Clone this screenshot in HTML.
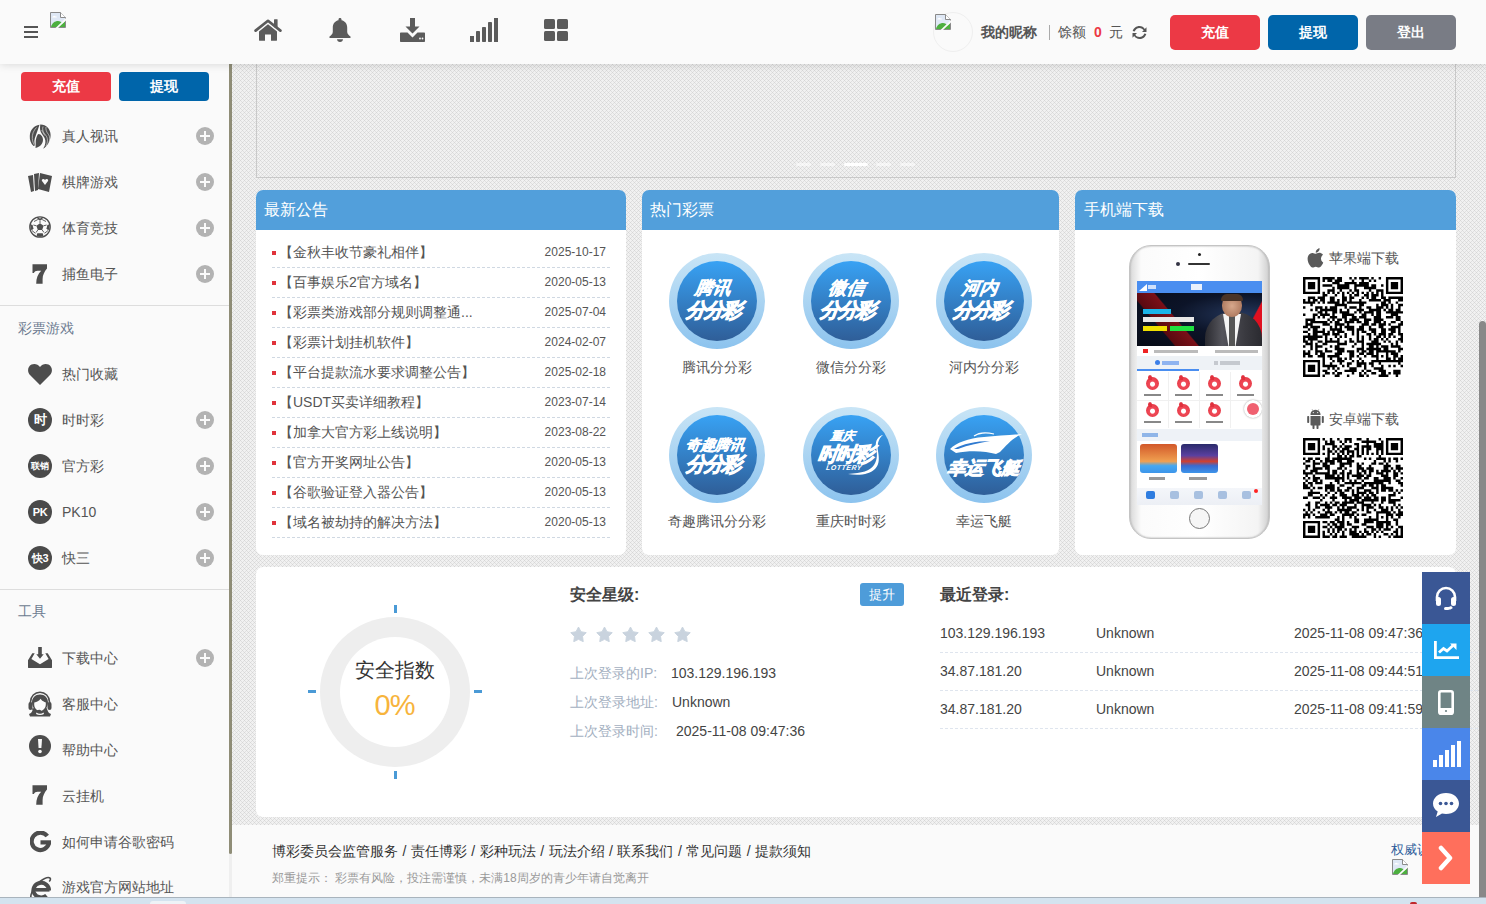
<!DOCTYPE html>
<html><head><meta charset="utf-8">
<style>
*{margin:0;padding:0;box-sizing:border-box}
html,body{width:1486px;height:904px;overflow:hidden}
body{font-family:"Liberation Sans",sans-serif;font-size:14px;color:#555;position:relative;background:#ebebeb}
.abs{position:absolute}
#bg{position:absolute;left:0;top:0}
#header{position:absolute;left:0;top:0;width:1486px;height:64px;background:#fafafa;box-shadow:0 1px 8px rgba(0,0,0,.13);z-index:10}
#sidebar{position:absolute;left:0;top:64px;width:229px;height:840px;background:#fafafa;overflow:hidden}
.sbtn{position:absolute;height:29px;width:90px;border-radius:4px;color:#fff;text-align:center;line-height:29px;font-size:14px;font-weight:bold}
.hbtn{position:absolute;top:15px;height:35px;width:90px;border-radius:5px;color:#fff;text-align:center;line-height:35px;font-size:14px;font-weight:bold}
.red{background:#ec3945}.blue{background:#0065aa}.gray{background:#797c85}
.mi{position:absolute;left:0;width:229px;height:46px}
.mi .ic{position:absolute;left:28px;top:11px;width:24px;height:24px}
.mi .tx{position:absolute;left:62px;top:0;line-height:46px;font-size:14px;color:#555;white-space:nowrap}
.mi .pl{position:absolute;left:196px;top:14px;width:18px;height:18px;border-radius:50%;background:#b3b3b3}
.mi .pl:before{content:"";position:absolute;left:4px;top:8px;width:10px;height:2px;background:#fafafa}
.mi .pl:after{content:"";position:absolute;left:8px;top:4px;width:2px;height:10px;background:#fafafa}
.sep{position:absolute;left:0;width:229px;height:1px;background:#ddd}
.grp{position:absolute;left:18px;font-size:14px;color:#6c7a90;line-height:16px}
.circ{position:absolute;left:28px;top:11px;width:24px;height:24px;border-radius:50%;background:#4a4a4a;color:#fff;font-size:13px;font-weight:bold;text-align:center;line-height:24px;white-space:nowrap;letter-spacing:-.3px}
.panel{position:absolute;top:190px;height:365px;background:#fff;border-radius:7px;overflow:hidden}
.ph{height:40px;background:#529fdb;color:#fff;font-size:16px;line-height:40px;padding-left:8px}
.nrow{position:absolute;left:16px;width:338px;height:30px;background:repeating-linear-gradient(90deg,#cfd8e2 0 3px,transparent 3px 5px) left bottom/100% 1px no-repeat}
.nrow .b{position:absolute;left:0;top:13px;width:4px;height:4px;background:#e0323a}
.nrow .t{position:absolute;left:7px;top:0;line-height:28px;font-size:14px;color:#555;white-space:nowrap}
.nrow .d{position:absolute;right:4px;top:0;line-height:28px;font-size:12px;color:#555}
.lot{position:absolute;width:96px;height:96px;border-radius:50%;background:linear-gradient(#c9e5f6,#8cc3ee)}
.lot .in{position:absolute;left:8px;top:8px;width:80px;height:80px;border-radius:50%;background:linear-gradient(#38a2f4,#2f5e98);color:#fff;text-align:center;font-weight:bold;font-style:italic}
.lname{position:absolute;width:140px;text-align:center;font-size:14px;color:#555;line-height:16px}
.lot .l1{position:absolute;left:-4px;width:80px;top:16px;font-size:18px;line-height:22px;text-align:center;transform:skewX(-8deg);-webkit-text-stroke:.2px #fff}
.lot .l2{position:absolute;left:-4px;width:80px;top:37px;font-size:20px;line-height:24px;text-align:center;transform:skewX(-8deg);letter-spacing:-2px;-webkit-text-stroke:.9px #fff}
.fb{position:absolute;left:1422px;width:48px;height:52px}
.lbl{position:absolute;left:570px;font-size:14px;color:#a3afbf;line-height:16px;white-space:nowrap}
.val{position:absolute;font-size:14px;color:#444;line-height:16px;white-space:nowrap}
.lr{position:absolute;left:940px;width:540px;height:38px;background:repeating-linear-gradient(90deg,#dfe5ee 0 3px,transparent 3px 5px) left bottom/100% 1px no-repeat}
.lr span{position:absolute;top:4px;line-height:28px;font-size:14px;color:#444;white-space:nowrap}
</style></head><body>

<svg id="bg" width="1486" height="904"><defs>
<pattern id="chk" width="4" height="4" patternUnits="userSpaceOnUse"><rect width="4" height="4" fill="#f1f1f1"/><rect x="0" y="0" width="1" height="1" fill="#d6d6d6"/><rect x="2" y="2" width="1" height="1" fill="#d6d6d6"/><rect x="1" y="1" width="1" height="1" fill="#e0e0e0"/><rect x="3" y="3" width="1" height="1" fill="#e0e0e0"/><rect x="3" y="1" width="1" height="1" fill="#e0e0e0"/><rect x="1" y="3" width="1" height="1" fill="#e0e0e0"/></pattern>
</defs><rect width="1486" height="904" fill="url(#chk)"/></svg>

<!-- HEADER -->
<div id="header">
  <div class="abs" style="left:24px;top:26px;width:14px;height:2px;background:#555"></div>
  <div class="abs" style="left:24px;top:31px;width:14px;height:2px;background:#555"></div>
  <div class="abs" style="left:24px;top:36px;width:14px;height:2px;background:#555"></div>
<svg class="abs" style="left:254px;top:19px" width="28" height="22" viewBox="0 0 28 22"><g fill="#5b5b5b"><rect x="20" y="0.300" width="3.600" height="8" rx=".5"/><path d="M5 12.500L14 5.300 23 12.500v8.700c0 .3-.2.5-.5.5H17v-6.300h-6v6.300H5.500c-.3 0-.5-.2-.5-.5z"/></g><path d="M1.600 11.600L14 1.800 26.400 11.600" fill="none" stroke="#5b5b5b" stroke-width="2.700" stroke-linecap="round" stroke-linejoin="round"/></svg>
<svg class="abs" style="left:329px;top:18px" width="22" height="24" viewBox="0 0 22 24"><g fill="#5b5b5b"><path d="M11 0c.9 0 1.500.6 1.500 1.400v.8c3.600.7 5.700 3.600 5.700 7.300v4.300c0 2 1.300 3.400 3.300 4.700v1.600H.5v-1.600c2-1.300 3.300-2.700 3.300-4.700V9.500c0-3.700 2.100-6.600 5.700-7.300v-.8C9.500.6 10.100 0 11 0z"/><path d="M8 21.200h6c0 1.600-1.300 2.800-3 2.800s-3-1.200-3-2.800z"/></g></svg>
<svg class="abs" style="left:400px;top:18px" width="25" height="24" viewBox="0 0 25 24"><g fill="#5b5b5b"><path d="M10 0h5v8.500h4.500L12.500 15.500 5.500 8.500H10z"/><path d="M0 15.500c0-.6.400-1 1-1h6.500l5 5 5-5H24c.6 0 1 .4 1 1V23c0 .6-.4 1-1 1H1c-.6 0-1-.4-1-1z"/></g><g fill="#fafafa"><circle cx="20" cy="20.500" r=".9"/><circle cx="22.500" cy="20.500" r=".9"/></g></svg>
<svg class="abs" style="left:470px;top:18px" width="28" height="24" viewBox="0 0 28 24"><g fill="#5b5b5b"><rect x="0" y="18" width="4" height="6"/><rect x="6" y="13" width="4" height="11" rx=".8"/><rect x="12" y="9" width="4" height="15" rx=".8"/><rect x="18" y="4" width="4" height="20" rx=".8"/><rect x="24" y="0" width="4" height="24"/></g></svg>
<svg class="abs" style="left:544px;top:19px" width="24" height="22" viewBox="0 0 24 22"><g fill="#5b5b5b"><rect x="0" y="0" width="11" height="10" rx="1.500"/><rect x="13" y="0" width="11" height="10" rx="1.500"/><rect x="0" y="12" width="11" height="10" rx="1.500"/><rect x="13" y="12" width="11" height="10" rx="1.500"/></g></svg>
<svg class="abs" style="left:1132px;top:26px" width="15" height="13" viewBox="0 0 15 13"><g fill="#555"><path d="M7.500 0c2.300 0 4.200 1.200 5.300 2.900L14.500 1.300V6H10l1.700-1.700C10.900 3 9.300 2 7.500 2 5.200 2 3.300 3.600 2.700 5.600L.7 5.100C1.500 2.200 4.200 0 7.500 0z"/><path d="M7.500 13c-2.300 0-4.200-1.200-5.300-2.900L.5 11.700V7H5L3.300 8.700C4.100 10 5.700 11 7.500 11c2.300 0 4.200-1.600 4.800-3.600l2 .5C13.500 10.800 10.800 13 7.500 13z"/></g></svg>
<svg class="abs" style="left:50px;top:12px" width="16" height="16" viewBox="0 0 16 16"><path d="M.5.5h10l5 5v10H.5z" fill="#dfe8f5" stroke="#8a8a8a" stroke-width="1"/><path d="M10.500.5v5h5" fill="#fff" stroke="#8a8a8a" stroke-width="1"/><path d="M3 4.500c.5-1 2-1 2.500 0h1c.5 0 .5 1 0 1H2.500c-.5 0-.5-1 .5-1z" fill="#fff"/><path d="M1 15c1-4 4-6 7-6 2 0 3.500 1 4.500 2.500L15 9v6z" fill="#4caf3f"/><path d="M8 16L16 8.500V6L5.500 16z" fill="#fafafa"/></svg>
<div class="abs" style="left:933px;top:12px;width:40px;height:40px;border-radius:50%;border:1px solid #efefef;overflow:hidden"></div>
<svg class="abs" style="left:935px;top:14px" width="16" height="16" viewBox="0 0 16 16"><path d="M.5.5h10l5 5v10H.5z" fill="#dfe8f5" stroke="#8a8a8a" stroke-width="1"/><path d="M10.500.5v5h5" fill="#fff" stroke="#8a8a8a" stroke-width="1"/><path d="M3 4.500c.5-1 2-1 2.500 0h1c.5 0 .5 1 0 1H2.500c-.5 0-.5-1 .5-1z" fill="#fff"/><path d="M1 15c1-4 4-6 7-6 2 0 3.500 1 4.500 2.500L15 9v6z" fill="#4caf3f"/><path d="M8 16L16 8.500V6L5.500 16z" fill="#fafafa"/></svg>
  <div class="abs" style="left:981px;top:24px;line-height:16px;font-size:14px;font-weight:bold;color:#555">我的昵称</div>
  <div class="abs" style="left:1049px;top:25px;width:1px;height:15px;background:#aaa"></div>
  <div class="abs" style="left:1058px;top:24px;line-height:16px;font-size:14px;color:#555">馀额</div>
  <div class="abs" style="left:1094px;top:24px;line-height:16px;font-size:14px;font-weight:bold;color:#ec3945">0</div>
  <div class="abs" style="left:1109px;top:24px;line-height:16px;font-size:14px;color:#555">元</div>
  <div class="hbtn red" style="left:1170px">充值</div>
  <div class="hbtn blue" style="left:1268px">提现</div>
  <div class="hbtn gray" style="left:1366px">登出</div>
</div>

<!-- SIDEBAR -->
<div id="sidebar">
<svg class="abs" style="left:29px;top:60px" width="22" height="25" viewBox="0 0 22 25"><g fill="#4d4d4d"><path d="M10.500 .7C5 1.500 1 6 .8 12c-.2 4 1 7.500 3.700 10l1.800-.8C4.800 19 5.200 15 6.800 11.500 8.200 7.800 9.200 4.500 10.500.7z"/><path d="M9.600 10c2.600.3 4.400 2.800 4.400 5.800 0 4-2.800 7-7.500 8.200.2-1.800.2-3.800.2-6 0-2.500.6-4.500 1.300-6 .5-1.200 1-1.800 1.600-2z"/><path d="M11.200.5C17 .3 21.600 5 21.600 11c0 6-3 11-7.500 13.800 2.500-3.800 3-7.800 1.500-10.800-1.500-3-4-5-4.500-8.500-.2-2 .1-3.500.1-5z"/></g><g fill="none" stroke="#fafafa" stroke-width=".55"><path d="M14 2.500c-1 3 0 6 2.500 8.500 2.500 3 2.500 7 .5 11"/><path d="M17 3c-.5 2.500.5 5 2.500 7.500 1.500 2 1.500 5 .5 8"/><path d="M12.800 6c.5 2 2 3.500 3 5.500"/><path d="M7.500 3.500C4.500 6.500 3 10.500 3.300 14.500c.2 2.800 1 5 2.300 6.800"/></g></svg>
<svg class="abs" style="left:27px;top:108px" width="26" height="20" viewBox="0 0 26 20"><g fill="#4d4d4d"><path d="M1 4l5-1 1 16-3 1z"/><path d="M7 2l5-1-1 17-3 1z"/><path d="M13 1l12 3-3 16-11-3z"/></g><path fill="#fafafa" d="M18 8c1-2 4-1 3 1l-3 4-3-4c-1-2 2-3 3-1z"/></svg>
<svg class="abs" style="left:29px;top:152px" width="22" height="22" viewBox="0 0 22 22"><circle cx="11" cy="11" r="10.200" fill="#fafafa" stroke="#4d4d4d" stroke-width="1.300"/><g fill="#4d4d4d"><path d="M11 7.200l3.600 2.600-1.400 4.200H8.800L7.400 9.800z"/><path d="M8 1.300l3 1.200 3-1.200-.8 2.300L11 4.300 8.800 3.600z"/><path d="M1.300 8.300l2.300.6.8 3.300-1.500 2.300-1.400-1.700z"/><path d="M20.700 8.300l-2.300.6-.8 3.300 1.500 2.300 1.400-1.700z"/><path d="M7.500 19.800l.8-2.500h5.400l.8 2.500-3.500 1.300z"/></g><g fill="none" stroke="#4d4d4d" stroke-width=".9"><path d="M11 4.300v2.900M7.400 9.800L4.400 9M14.600 9.800l3-.8M8.800 14l-1.800 2.500M13.200 14l1.800 2.500M8.800 3.600L5 5.500M13.200 3.600L17 5.500M2.900 14.500l3.500 2.800M19.100 14.500l-3.500 2.800"/></g></svg>
<svg class="abs" style="left:32px;top:200px" width="15" height="20" viewBox="0 0 15 20"><path fill="#4d4d4d" d="M.5 .3H15v4.200C12.500 7.500 10.600 11 10.600 15v4.700H4.200C4.200 14 6 10 9.200 6.800H5.500C3.800 6.800 2.600 7.500 1.900 9H.5z"/></svg>
<svg class="abs" style="left:28px;top:299px" width="24" height="22" viewBox="0 0 24 22"><path fill="#4d4d4d" d="M12 22L2 12C-1 9-.5 3.500 3.500 1.500 7 0 10 1.500 12 4c2-2.500 5-4 8.500-2.500 4 2 4.500 7.500 1.500 10.500z"/></svg>
<svg class="abs" style="left:28px;top:582px" width="24" height="23" viewBox="0 0 24 23"><g fill="#4d4d4d"><rect x="10.200" y="1" width="3.600" height="8"/><path d="M8.300 8.300h7.400L12 12.800z"/><path d="M0 14.200L4.300 7.200h2.400L3.400 13 12 18.300 20.600 13 17.300 7.200h2.400L24 14.200v7.300c0 .3-.2.5-.5.5H.5c-.3 0-.5-.2-.5-.5z"/></g></svg>
<svg class="abs" style="left:27px;top:626px" width="26" height="27" viewBox="0 0 26 27"><path d="M3.500 15V12C3.500 6.500 7.800 2.200 13 2.200S22.500 6.500 22.500 12v3" fill="none" stroke="#4d4d4d" stroke-width="1.600"/><g fill="#4d4d4d"><path d="M13 4.500c-4.800 0-8 3.300-8 8 0 2 .6 3.800 1.500 5.200L5 21.500c-.5 1.200-1.500 2-3 2.500L3 26.500h20l1-2.500c-1.500-.5-2.500-1.300-3-2.500l-1.500-3.800c.9-1.400 1.500-3.200 1.500-5.200 0-4.700-3.200-8-8-8z"/><rect x="1.500" y="12" width="4" height="8" rx="2"/><rect x="20.500" y="12" width="4" height="8" rx="2"/></g><path fill="#fafafa" d="M7.300 12.500c2.500-.3 4.800-1.500 6.300-3.700.8 1.500 2.300 2.600 3.900 3.100.6 0 1.100.2 1.300.6v2c0 3.500-2.600 6.500-5.800 6.500s-5.800-3-5.800-6.500z"/><path d="M5.200 18.500c1 1.700 3 2.300 6 2.300" fill="none" stroke="#4d4d4d" stroke-width="1.200"/><ellipse cx="12.300" cy="20.800" rx="1.700" ry="1.100" fill="#4d4d4d"/><path fill="#fafafa" d="M9.500 22.500c1 .8 2.200 1.200 3.500 1.200s2.500-.4 3.500-1.200l.5 1.500c-1.200.7-2.500 1-4 1s-2.800-.3-4-1z"/></svg>
<svg class="abs" style="left:29px;top:671px" width="22" height="22" viewBox="0 0 22 22"><circle cx="11" cy="11" r="11" fill="#4d4d4d"/><path fill="#fafafa" d="M9 4h4l-.6 9H9.600z"/><circle cx="11" cy="16.500" r="1.800" fill="#fafafa"/></svg>
<svg class="abs" style="left:32px;top:721px" width="15" height="20" viewBox="0 0 15 20"><path fill="#4d4d4d" d="M.5 .3H15v4.200C12.500 7.500 10.600 11 10.600 15v4.700H4.200C4.200 14 6 10 9.200 6.800H5.500C3.800 6.800 2.600 7.500 1.900 9H.5z"/></svg>
<svg class="abs" style="left:30px;top:767px" width="21" height="22" viewBox="0 0 21 22"><path d="M17.300 5A8.700 8.700 0 1 0 19 11.500" fill="none" stroke="#4d4d4d" stroke-width="4.200"/><rect x="10.500" y="9.300" width="10.500" height="4.200" fill="#4d4d4d"/></svg>
<svg class="abs" style="left:28px;top:811px" width="24" height="24" viewBox="0 0 24 24"><path d="M21 15.500A7.800 7.300 0 1 0 18.500 20.500" fill="none" stroke="#4d4d4d" stroke-width="4"/><rect x="6" y="13" width="15.500" height="3.600" fill="#4d4d4d"/><path fill="none" stroke="#4d4d4d" stroke-width="1.600" d="M3 23.500C2 19 6 11 12 6.500c4-3 8-5 10-3.500 1 .8.200 2.500-.8 3.500"/></svg>
  <div class="sbtn red" style="left:21px;top:8px">充值</div>
  <div class="sbtn blue" style="left:119px;top:8px">提现</div>
  <div class="mi" style="top:49px"><div class="ic"></div><div class="tx">真人视讯</div><div class="pl"></div></div>
  <div class="mi" style="top:95px"><div class="ic"></div><div class="tx">棋牌游戏</div><div class="pl"></div></div>
  <div class="mi" style="top:141px"><div class="ic"></div><div class="tx">体育竞技</div><div class="pl"></div></div>
  <div class="mi" style="top:187px"><div class="ic"></div><div class="tx">捕鱼电子</div><div class="pl"></div></div>
  <div class="sep" style="top:241px"></div>
  <div class="grp" style="top:256px">彩票游戏</div>
  <div class="mi" style="top:287px"><div class="ic"></div><div class="tx">热门收藏</div></div>
  <div class="mi" style="top:333px"><div class="circ">时</div><div class="tx">时时彩</div><div class="pl"></div></div>
  <div class="mi" style="top:379px"><div class="circ" style="font-size:9px">联销</div><div class="tx">官方彩</div><div class="pl"></div></div>
  <div class="mi" style="top:425px"><div class="circ" style="font-size:11px">PK</div><div class="tx">PK10</div><div class="pl"></div></div>
  <div class="mi" style="top:471px"><div class="circ" style="font-size:11px">快3</div><div class="tx">快三</div><div class="pl"></div></div>
  <div class="sep" style="top:525px"></div>
  <div class="grp" style="top:539px">工具</div>
  <div class="mi" style="top:571px"><div class="ic"></div><div class="tx">下载中心</div><div class="pl"></div></div>
  <div class="mi" style="top:617px"><div class="ic"></div><div class="tx">客服中心</div></div>
  <div class="mi" style="top:663px"><div class="ic"></div><div class="tx">帮助中心</div></div>
  <div class="mi" style="top:709px"><div class="ic"></div><div class="tx">云挂机</div></div>
  <div class="mi" style="top:755px"><div class="ic"></div><div class="tx">如何申请谷歌密码</div></div>
  <div class="mi" style="top:800px"><div class="ic"></div><div class="tx">游戏官方网站地址</div></div>
</div>
<div class="abs" style="left:229px;top:64px;width:3px;height:840px;background:#efefef"></div>
<div class="abs" style="left:229px;top:64px;width:3px;height:790px;background:#8f8d77;border-radius:0 0 2px 2px"></div>

<!-- BANNER -->
<div class="abs" style="left:256px;top:40px;width:1200px;height:138px;border:1px solid #c9c9c9;border-top:none"></div>
<div class="abs" style="left:796px;top:163px;width:15px;height:3px;border-radius:2px;background:rgba(255,255,255,.55)"></div>
<div class="abs" style="left:820px;top:163px;width:15px;height:3px;border-radius:2px;background:rgba(255,255,255,.55)"></div>
<div class="abs" style="left:844px;top:163px;width:24px;height:3px;border-radius:2px;background:#fff"></div>
<div class="abs" style="left:876px;top:163px;width:15px;height:3px;border-radius:2px;background:rgba(255,255,255,.55)"></div>
<div class="abs" style="left:900px;top:163px;width:15px;height:3px;border-radius:2px;background:rgba(255,255,255,.55)"></div>

<!-- PANEL 1 -->
<div class="panel" style="left:256px;width:370px">
  <div class="ph">最新公告</div>
  <div class="nrow" style="top:48px"><div class="b"></div><div class="t">【金秋丰收节豪礼相伴】</div><div class="d">2025-10-17</div></div>
  <div class="nrow" style="top:78px"><div class="b"></div><div class="t">【百事娱乐2官方域名】</div><div class="d">2020-05-13</div></div>
  <div class="nrow" style="top:108px"><div class="b"></div><div class="t">【彩票类游戏部分规则调整通...</div><div class="d">2025-07-04</div></div>
  <div class="nrow" style="top:138px"><div class="b"></div><div class="t">【彩票计划挂机软件】</div><div class="d">2024-02-07</div></div>
  <div class="nrow" style="top:168px"><div class="b"></div><div class="t">【平台提款流水要求调整公告】</div><div class="d">2025-02-18</div></div>
  <div class="nrow" style="top:198px"><div class="b"></div><div class="t">【USDT买卖详细教程】</div><div class="d">2023-07-14</div></div>
  <div class="nrow" style="top:228px"><div class="b"></div><div class="t">【加拿大官方彩上线说明】</div><div class="d">2023-08-22</div></div>
  <div class="nrow" style="top:258px"><div class="b"></div><div class="t">【官方开奖网址公告】</div><div class="d">2020-05-13</div></div>
  <div class="nrow" style="top:288px"><div class="b"></div><div class="t">【谷歌验证登入器公告】</div><div class="d">2020-05-13</div></div>
  <div class="nrow" style="top:318px"><div class="b"></div><div class="t">【域名被劫持的解决方法】</div><div class="d">2020-05-13</div></div>
</div>

<!-- PANEL 2 -->
<div class="panel" style="left:642px;width:417px">
  <div class="ph">热门彩票</div>
  <div class="lot" style="left:27px;top:63px"><div class="in"><div class="l1">腾讯</div><div class="l2">分分彩</div></div></div>
  <div class="lname" style="left:5px;top:169px">腾讯分分彩</div>
  <div class="lot" style="left:161px;top:63px"><div class="in"><div class="l1">微信</div><div class="l2">分分彩</div></div></div>
  <div class="lname" style="left:139px;top:169px">微信分分彩</div>
  <div class="lot" style="left:294px;top:63px"><div class="in"><div class="l1">河内</div><div class="l2">分分彩</div></div></div>
  <div class="lname" style="left:272px;top:169px">河内分分彩</div>
  <div class="lot" style="left:27px;top:217px"><div class="in"><div class="l1" style="font-size:15px;top:19px;left:-2px;letter-spacing:-.5px">奇趣腾讯</div><div class="l2" style="top:37px">分分彩</div></div></div>
  <div class="lname" style="left:5px;top:323px">奇趣腾讯分分彩</div>
  <div class="lot" style="left:161px;top:217px"><div class="in"><div class="l1" style="font-size:12px;line-height:14px;top:14px;left:-8px">重庆</div><div class="l2" style="top:27px;font-size:20px;left:-6px">时时彩</div><div class="l1" style="font-size:7px;line-height:8px;top:49px;left:-7px;letter-spacing:.5px;font-family:'Liberation Sans';-webkit-text-stroke:0">LOTTERY</div><svg class="abs" style="left:0;top:0" width="80" height="80" viewBox="0 0 80 80"><path fill="#fff" d="M72 20c-5 1-8 6-7 12 1 6 2 12-2 18-4 6-12 8-26 9 12 2 22 0 27-5 5-5 4-12 3-18-1-6 0-12 5-16z"/></svg></div></div>
  <div class="lname" style="left:139px;top:323px">重庆时时彩</div>
  <div class="lot" style="left:294px;top:217px"><div class="in"><svg class="abs" style="left:0;top:0" width="80" height="80" viewBox="0 0 80 80"><path fill="#fff" d="M6 34c6-6 18-11 34-12 12-1 26-2 38-3-10 4-16 12-22 18l-4 2c-10-3-26-4-40-1z"/><path fill="#2f7ad0" d="M10 34c8-5 22-8 36-8-10 2-22 4-32 8z"/><path fill="none" stroke="#fff" stroke-width="1.2" d="M30 21c4-3 12-4 20-2"/></svg><div class="l2" style="top:41px;font-size:18px;left:-8px;width:96px;letter-spacing:0">幸运飞艇</div></div></div>
  <div class="lname" style="left:272px;top:323px">幸运飞艇</div>
</div>

<!-- PANEL 3 -->
<div class="panel" style="left:1075px;width:381px">
  <div class="ph" style="padding-left:9px">手机端下载</div>

  <div class="abs" style="left:54px;top:55px;width:141px;height:294px;border-radius:22px;background:linear-gradient(90deg,#d9d9d9,#fbfbfb 8%,#fff 50%,#f4f4f4 92%,#cfcfcf);border:1px solid #c4c4c4;box-shadow:inset 0 0 2px #999"></div>
  <div class="abs" style="left:123px;top:63px;width:3px;height:3px;border-radius:50%;background:#222"></div>
  <div class="abs" style="left:101px;top:72px;width:4px;height:4px;border-radius:50%;background:#334"></div>
  <div class="abs" style="left:113px;top:73px;width:22px;height:2px;border-radius:1px;background:#333"></div>
  <div class="abs" style="left:114px;top:318px;width:21px;height:21px;border-radius:50%;border:1px solid #777;background:#f6f6f6"></div>
  <div class="abs" style="left:62px;top:91px;width:125px;height:224px;background:#fff;overflow:hidden">
    <div class="abs" style="left:0;top:0;width:125px;height:12px;background:#4a8ef0"></div>
    <div class="abs" style="left:2px;top:3px;width:8px;height:7px;background:#fff;clip-path:polygon(0 100%,100% 0,100% 100%)"></div>
    <div class="abs" style="left:11px;top:4px;width:8px;height:4px;background:#cfe0fb"></div>
    <div class="abs" style="left:54px;top:3px;width:11px;height:6px;background:#e8f0fc"></div>
    <div class="abs" style="left:0;top:12px;width:125px;height:53px;background:radial-gradient(ellipse at 85% 40%,#24365a 0,#0c1428 45%,#070b16 100%)"></div>
    <div class="abs" style="left:0;top:12px;width:125px;height:53px;background:linear-gradient(50deg,transparent 22%,#5a0a10 23%,#7a1018 36%,transparent 37%)"></div>
    <div class="abs" style="left:0;top:12px;width:125px;height:53px;background:linear-gradient(118deg,transparent 84%,#e01020 85%)"></div>
    <div class="abs" style="left:68px;top:31px;width:57px;height:34px;border-radius:26px 26px 0 0;background:linear-gradient(90deg,#2a2a30,#55555c 30%,#3a3a40 70%,#2a2a30)"></div>
    <div class="abs" style="left:86px;top:33px;width:18px;height:32px;background:#f4f4f4;clip-path:polygon(0 0,100% 0,70% 100%,30% 100%)"></div>
    <div class="abs" style="left:92px;top:35px;width:6px;height:30px;background:#555"></div>
    <div class="abs" style="left:85px;top:14px;width:20px;height:22px;border-radius:45% 45% 50% 50%;background:radial-gradient(#d7a88c,#a06a50)"></div>
    <div class="abs" style="left:84px;top:13px;width:22px;height:7px;border-radius:10px 10px 2px 2px;background:#4a3428"></div>
    <div class="abs" style="left:6px;top:28px;width:28px;height:5px;background:#19b4e8"></div>
    <div class="abs" style="left:6px;top:36px;width:51px;height:5px;background:#e8e8e8"></div>
    <div class="abs" style="left:6px;top:45px;width:24px;height:5px;background:#f0e000"></div>
    <div class="abs" style="left:33px;top:45px;width:24px;height:5px;background:#20e040"></div>
    <div class="abs" style="left:0;top:65px;width:125px;height:10px;background:#fff"></div>
    <div class="abs" style="left:6px;top:68px;width:5px;height:4px;background:#e22"></div>
    <div class="abs" style="left:17px;top:69px;width:44px;height:3px;background:#bbb"></div>
    <div class="abs" style="left:78px;top:69px;width:43px;height:3px;background:#bbb"></div>
    <div class="abs" style="left:0;top:75px;width:125px;height:14px;background:#eef2f6"></div>
    <div class="abs" style="left:0;top:88px;width:62px;height:2px;background:#4a8ef0"></div>
    <div class="abs" style="left:18px;top:79px;width:5px;height:5px;border-radius:50%;background:#3b7fe8"></div>
    <div class="abs" style="left:25px;top:80px;width:17px;height:4px;background:#8fb4f0"></div>
    <div class="abs" style="left:77px;top:80px;width:4px;height:4px;background:#c5c9cf"></div>
    <div class="abs" style="left:83px;top:80px;width:20px;height:4px;background:#c5c9cf"></div>
    <div class="abs" style="left:31px;top:91px;width:1px;height:56px;background:#f0f0f0"></div>
    <div class="abs" style="left:62px;top:91px;width:1px;height:56px;background:#f0f0f0"></div>
    <div class="abs" style="left:93px;top:91px;width:1px;height:56px;background:#f0f0f0"></div>
    <div class="abs" style="left:0;top:119px;width:125px;height:1px;background:#f0f0f0"></div>
<div class="abs" style="left:9px;top:96px;width:13px;height:13px;border-radius:50%;background:radial-gradient(circle at 50% 55%,#fff 0 2px,#f04a58 3px,#e0303c)"></div><div class="abs" style="left:11px;top:94px;width:4px;height:5px;border-radius:50% 50% 0 50%;background:#e0303c"></div><div class="abs" style="left:7px;top:113px;width:17px;height:2px;background:#888"></div><div class="abs" style="left:40px;top:96px;width:13px;height:13px;border-radius:50%;background:radial-gradient(circle at 50% 55%,#fff 0 2px,#f04a58 3px,#e0303c)"></div><div class="abs" style="left:42px;top:94px;width:4px;height:5px;border-radius:50% 50% 0 50%;background:#e0303c"></div><div class="abs" style="left:38px;top:113px;width:17px;height:2px;background:#888"></div><div class="abs" style="left:71px;top:96px;width:13px;height:13px;border-radius:50%;background:radial-gradient(circle at 50% 55%,#fff 0 2px,#f04a58 3px,#e0303c)"></div><div class="abs" style="left:73px;top:94px;width:4px;height:5px;border-radius:50% 50% 0 50%;background:#e0303c"></div><div class="abs" style="left:69px;top:113px;width:17px;height:2px;background:#888"></div><div class="abs" style="left:102px;top:96px;width:13px;height:13px;border-radius:50%;background:radial-gradient(circle at 50% 55%,#fff 0 2px,#f04a58 3px,#e0303c)"></div><div class="abs" style="left:104px;top:94px;width:4px;height:5px;border-radius:50% 50% 0 50%;background:#e0303c"></div><div class="abs" style="left:100px;top:113px;width:17px;height:2px;background:#888"></div><div class="abs" style="left:9px;top:123px;width:13px;height:13px;border-radius:50%;background:radial-gradient(circle at 50% 55%,#fff 0 2px,#f04a58 3px,#e0303c)"></div><div class="abs" style="left:11px;top:121px;width:4px;height:5px;border-radius:50% 50% 0 50%;background:#e0303c"></div><div class="abs" style="left:7px;top:140px;width:17px;height:2px;background:#888"></div><div class="abs" style="left:40px;top:123px;width:13px;height:13px;border-radius:50%;background:radial-gradient(circle at 50% 55%,#fff 0 2px,#f04a58 3px,#e0303c)"></div><div class="abs" style="left:42px;top:121px;width:4px;height:5px;border-radius:50% 50% 0 50%;background:#e0303c"></div><div class="abs" style="left:38px;top:140px;width:17px;height:2px;background:#888"></div><div class="abs" style="left:71px;top:123px;width:13px;height:13px;border-radius:50%;background:radial-gradient(circle at 50% 55%,#fff 0 2px,#f04a58 3px,#e0303c)"></div><div class="abs" style="left:73px;top:121px;width:4px;height:5px;border-radius:50% 50% 0 50%;background:#e0303c"></div><div class="abs" style="left:69px;top:140px;width:17px;height:2px;background:#888"></div><div class="abs" style="left:107px;top:119px;width:18px;height:18px;border-radius:50%;background:#fff;box-shadow:0 0 2px #999"></div><div class="abs" style="left:110px;top:122px;width:12px;height:12px;border-radius:50%;background:#f06070"></div>
    <div class="abs" style="left:0;top:148px;width:125px;height:12px;background:#eef2f7"></div>
    <div class="abs" style="left:5px;top:152px;width:16px;height:4px;background:#8fb5e8"></div>
    <div class="abs" style="left:3px;top:163px;width:37px;height:29px;border-radius:3px;background:linear-gradient(#d2582a,#f0a050 60%,#45a8f0 75%,#3d95ea)"></div>
    <div class="abs" style="left:44px;top:163px;width:37px;height:29px;border-radius:3px;background:linear-gradient(#2a2a6a,#5a40a0 40%,#d04030 60%,#3a6ad0 75%,#3d95ea)"></div>
    <div class="abs" style="left:12px;top:196px;width:16px;height:3px;background:#999"></div>
    <div class="abs" style="left:52px;top:196px;width:18px;height:3px;background:#999"></div>
    <div class="abs" style="left:0;top:207px;width:125px;height:17px;background:linear-gradient(#f4f6fa,#eceff5)"></div>
    <div class="abs" style="left:9px;top:210px;width:9px;height:8px;border-radius:2px;background:#2f7de0"></div><div class="abs" style="left:33px;top:210px;width:9px;height:8px;border-radius:2px;background:#a8c0e0"></div><div class="abs" style="left:57px;top:210px;width:9px;height:8px;border-radius:2px;background:#a8c0e0"></div><div class="abs" style="left:81px;top:210px;width:9px;height:8px;border-radius:2px;background:#a8c0e0"></div><div class="abs" style="left:105px;top:210px;width:9px;height:8px;border-radius:2px;background:#a8c0e0"></div><div class="abs" style="left:117px;top:208px;width:4px;height:4px;border-radius:50%;background:#f22"></div>
  </div>
  <div class="abs" style="left:190px;top:346px;width:3px;height:3px;background:#fff"></div>
<svg class="abs" style="left:232px;top:58px" width="17" height="20" viewBox="0 0 17 20"><path fill="#5a5a5a" d="M14 10.6c0-2.5 2-3.7 2.1-3.8-1.2-1.7-3-1.9-3.6-2-1.5-.2-3 .9-3.8.9-.8 0-2-.9-3.3-.8C3.700 5 2.200 5.900 1.400 7.400c-1.700 3-.4 7.300 1.200 9.700.8 1.200 1.800 2.500 3 2.400 1.200 0 1.700-.8 3.100-.8 1.500 0 1.900.8 3.200.8 1.300 0 2.200-1.200 3-2.400.9-1.300 1.300-2.600 1.300-2.700 0 0-2.300-.9-2.200-3.800zM11.600 3.300c.7-.8 1.100-1.900 1-3-1 0-2.100.7-2.800 1.500-.6.700-1.200 1.800-1 2.900 1.100.1 2.100-.6 2.800-1.400z"/></svg>
  <div class="abs" style="left:254px;top:60px;font-size:14px;line-height:16px;color:#555">苹果端下载</div>
  <svg class="abs" style="left:228px;top:87px" width="100" height="100" viewBox="0 0 41 41"><rect width="41" height="41" fill="#fff"/><path fill="#000" d="M0 0h7v1h-7zM8 0h5v1h-5zM14 0h2v1h-2zM19 0h1v1h-1zM21 0h1v1h-1zM23 0h4v1h-4zM28 0h1v1h-1zM31 0h1v1h-1zM34 0h7v1h-7zM0 1h1v1h-1zM6 1h1v1h-1zM8 1h1v1h-1zM10 1h2v1h-2zM13 1h3v1h-3zM20 1h1v1h-1zM24 1h1v1h-1zM27 1h1v1h-1zM29 1h1v1h-1zM34 1h1v1h-1zM40 1h1v1h-1zM0 2h1v1h-1zM2 2h3v1h-3zM6 2h1v1h-1zM12 2h3v1h-3zM17 2h5v1h-5zM23 2h4v1h-4zM34 2h1v1h-1zM36 2h3v1h-3zM40 2h1v1h-1zM0 3h1v1h-1zM2 3h3v1h-3zM6 3h1v1h-1zM8 3h4v1h-4zM14 3h5v1h-5zM21 3h6v1h-6zM28 3h2v1h-2zM32 3h1v1h-1zM34 3h1v1h-1zM36 3h3v1h-3zM40 3h1v1h-1zM0 4h1v1h-1zM2 4h3v1h-3zM6 4h1v1h-1zM12 4h1v1h-1zM14 4h5v1h-5zM21 4h1v1h-1zM25 4h5v1h-5zM34 4h1v1h-1zM36 4h3v1h-3zM40 4h1v1h-1zM0 5h1v1h-1zM6 5h1v1h-1zM10 5h3v1h-3zM15 5h1v1h-1zM19 5h1v1h-1zM21 5h2v1h-2zM27 5h1v1h-1zM30 5h3v1h-3zM34 5h1v1h-1zM40 5h1v1h-1zM0 6h7v1h-7zM8 6h1v1h-1zM10 6h1v1h-1zM12 6h1v1h-1zM14 6h1v1h-1zM16 6h1v1h-1zM18 6h1v1h-1zM20 6h1v1h-1zM22 6h1v1h-1zM24 6h1v1h-1zM26 6h1v1h-1zM28 6h1v1h-1zM30 6h1v1h-1zM32 6h1v1h-1zM34 6h7v1h-7zM8 7h2v1h-2zM13 7h1v1h-1zM16 7h1v1h-1zM19 7h1v1h-1zM21 7h2v1h-2zM25 7h2v1h-2zM28 7h3v1h-3zM32 7h1v1h-1zM2 8h3v1h-3zM6 8h3v1h-3zM11 8h2v1h-2zM16 8h2v1h-2zM19 8h2v1h-2zM24 8h1v1h-1zM26 8h1v1h-1zM28 8h2v1h-2zM32 8h2v1h-2zM35 8h6v1h-6zM0 9h1v1h-1zM2 9h1v1h-1zM4 9h2v1h-2zM7 9h2v1h-2zM11 9h2v1h-2zM14 9h1v1h-1zM16 9h2v1h-2zM19 9h1v1h-1zM23 9h1v1h-1zM27 9h5v1h-5zM33 9h3v1h-3zM39 9h2v1h-2zM0 10h5v1h-5zM6 10h1v1h-1zM8 10h1v1h-1zM10 10h5v1h-5zM16 10h1v1h-1zM18 10h8v1h-8zM32 10h2v1h-2zM35 10h1v1h-1zM38 10h1v1h-1zM3 11h1v1h-1zM13 11h5v1h-5zM23 11h2v1h-2zM30 11h1v1h-1zM32 11h3v1h-3zM36 11h1v1h-1zM39 11h2v1h-2zM0 12h1v1h-1zM5 12h3v1h-3zM9 12h1v1h-1zM11 12h3v1h-3zM17 12h1v1h-1zM19 12h3v1h-3zM23 12h1v1h-1zM26 12h2v1h-2zM30 12h3v1h-3zM34 12h1v1h-1zM36 12h1v1h-1zM39 12h1v1h-1zM3 13h1v1h-1zM5 13h1v1h-1zM7 13h7v1h-7zM15 13h1v1h-1zM18 13h1v1h-1zM22 13h3v1h-3zM27 13h5v1h-5zM33 13h1v1h-1zM35 13h2v1h-2zM38 13h2v1h-2zM6 14h2v1h-2zM9 14h1v1h-1zM12 14h2v1h-2zM15 14h4v1h-4zM21 14h1v1h-1zM23 14h1v1h-1zM25 14h4v1h-4zM30 14h2v1h-2zM34 14h7v1h-7zM0 15h1v1h-1zM4 15h2v1h-2zM7 15h4v1h-4zM12 15h1v1h-1zM16 15h5v1h-5zM24 15h2v1h-2zM28 15h1v1h-1zM30 15h2v1h-2zM36 15h3v1h-3zM4 16h1v1h-1zM6 16h1v1h-1zM8 16h1v1h-1zM11 16h3v1h-3zM16 16h2v1h-2zM20 16h2v1h-2zM23 16h3v1h-3zM29 16h3v1h-3zM34 16h3v1h-3zM38 16h2v1h-2zM1 17h4v1h-4zM10 17h1v1h-1zM12 17h1v1h-1zM14 17h2v1h-2zM17 17h1v1h-1zM19 17h4v1h-4zM25 17h3v1h-3zM29 17h4v1h-4zM38 17h2v1h-2zM1 18h1v1h-1zM3 18h7v1h-7zM11 18h1v1h-1zM13 18h2v1h-2zM17 18h4v1h-4zM22 18h2v1h-2zM25 18h2v1h-2zM29 18h3v1h-3zM33 18h1v1h-1zM36 18h2v1h-2zM40 18h1v1h-1zM1 19h3v1h-3zM8 19h3v1h-3zM13 19h4v1h-4zM18 19h1v1h-1zM24 19h3v1h-3zM28 19h2v1h-2zM31 19h3v1h-3zM35 19h1v1h-1zM39 19h2v1h-2zM0 20h2v1h-2zM3 20h4v1h-4zM11 20h1v1h-1zM13 20h1v1h-1zM15 20h1v1h-1zM17 20h4v1h-4zM23 20h2v1h-2zM27 20h1v1h-1zM31 20h2v1h-2zM36 20h4v1h-4zM2 21h1v1h-1zM4 21h2v1h-2zM8 21h1v1h-1zM11 21h5v1h-5zM18 21h3v1h-3zM22 21h3v1h-3zM27 21h3v1h-3zM32 21h2v1h-2zM35 21h3v1h-3zM39 21h1v1h-1zM0 22h2v1h-2zM4 22h5v1h-5zM10 22h1v1h-1zM12 22h1v1h-1zM14 22h3v1h-3zM20 22h1v1h-1zM22 22h1v1h-1zM24 22h2v1h-2zM28 22h2v1h-2zM32 22h2v1h-2zM36 22h2v1h-2zM39 22h1v1h-1zM2 23h1v1h-1zM4 23h2v1h-2zM8 23h3v1h-3zM12 23h3v1h-3zM17 23h1v1h-1zM20 23h1v1h-1zM22 23h1v1h-1zM26 23h2v1h-2zM29 23h1v1h-1zM31 23h3v1h-3zM35 23h2v1h-2zM39 23h2v1h-2zM0 24h8v1h-8zM9 24h1v1h-1zM13 24h1v1h-1zM15 24h1v1h-1zM17 24h1v1h-1zM22 24h1v1h-1zM24 24h1v1h-1zM27 24h1v1h-1zM30 24h2v1h-2zM33 24h1v1h-1zM35 24h1v1h-1zM37 24h1v1h-1zM40 24h1v1h-1zM0 25h1v1h-1zM2 25h4v1h-4zM9 25h1v1h-1zM11 25h1v1h-1zM14 25h1v1h-1zM19 25h1v1h-1zM22 25h1v1h-1zM24 25h1v1h-1zM27 25h1v1h-1zM29 25h2v1h-2zM32 25h1v1h-1zM34 25h1v1h-1zM39 25h2v1h-2zM0 26h2v1h-2zM3 26h1v1h-1zM6 26h2v1h-2zM9 26h6v1h-6zM17 26h1v1h-1zM19 26h2v1h-2zM22 26h3v1h-3zM28 26h3v1h-3zM33 26h1v1h-1zM35 26h1v1h-1zM38 26h1v1h-1zM40 26h1v1h-1zM1 27h3v1h-3zM5 27h1v1h-1zM8 27h2v1h-2zM14 27h4v1h-4zM21 27h1v1h-1zM24 27h1v1h-1zM26 27h6v1h-6zM36 27h1v1h-1zM38 27h1v1h-1zM0 28h1v1h-1zM3 28h1v1h-1zM5 28h3v1h-3zM11 28h1v1h-1zM13 28h2v1h-2zM20 28h1v1h-1zM24 28h1v1h-1zM27 28h2v1h-2zM30 28h1v1h-1zM32 28h3v1h-3zM36 28h4v1h-4zM3 29h1v1h-1zM5 29h1v1h-1zM9 29h1v1h-1zM13 29h4v1h-4zM22 29h3v1h-3zM26 29h6v1h-6zM33 29h2v1h-2zM39 29h2v1h-2zM0 30h1v1h-1zM2 30h1v1h-1zM5 30h3v1h-3zM9 30h3v1h-3zM14 30h3v1h-3zM18 30h3v1h-3zM22 30h1v1h-1zM24 30h2v1h-2zM27 30h2v1h-2zM30 30h8v1h-8zM39 30h1v1h-1zM0 31h3v1h-3zM5 31h1v1h-1zM7 31h2v1h-2zM13 31h3v1h-3zM19 31h2v1h-2zM23 31h2v1h-2zM26 31h3v1h-3zM30 31h1v1h-1zM34 31h1v1h-1zM36 31h3v1h-3zM0 32h1v1h-1zM2 32h2v1h-2zM6 32h3v1h-3zM10 32h5v1h-5zM19 32h2v1h-2zM22 32h1v1h-1zM25 32h1v1h-1zM28 32h3v1h-3zM32 32h1v1h-1zM34 32h1v1h-1zM37 32h2v1h-2zM40 32h1v1h-1zM8 33h1v1h-1zM11 33h1v1h-1zM14 33h2v1h-2zM17 33h1v1h-1zM19 33h1v1h-1zM23 33h1v1h-1zM30 33h1v1h-1zM34 33h2v1h-2zM37 33h1v1h-1zM39 33h2v1h-2zM0 34h7v1h-7zM8 34h1v1h-1zM12 34h1v1h-1zM14 34h3v1h-3zM20 34h1v1h-1zM22 34h1v1h-1zM24 34h1v1h-1zM28 34h13v1h-13zM0 35h1v1h-1zM6 35h1v1h-1zM8 35h1v1h-1zM11 35h1v1h-1zM15 35h1v1h-1zM18 35h2v1h-2zM22 35h4v1h-4zM27 35h2v1h-2zM31 35h1v1h-1zM39 35h1v1h-1zM0 36h1v1h-1zM2 36h3v1h-3zM6 36h1v1h-1zM8 36h6v1h-6zM16 36h1v1h-1zM18 36h1v1h-1zM22 36h2v1h-2zM25 36h1v1h-1zM28 36h1v1h-1zM32 36h1v1h-1zM35 36h1v1h-1zM37 36h1v1h-1zM40 36h1v1h-1zM0 37h1v1h-1zM2 37h3v1h-3zM6 37h1v1h-1zM10 37h1v1h-1zM12 37h1v1h-1zM14 37h1v1h-1zM19 37h3v1h-3zM25 37h1v1h-1zM29 37h4v1h-4zM0 38h1v1h-1zM2 38h3v1h-3zM6 38h1v1h-1zM8 38h2v1h-2zM13 38h1v1h-1zM17 38h5v1h-5zM24 38h1v1h-1zM26 38h2v1h-2zM31 38h3v1h-3zM37 38h3v1h-3zM0 39h1v1h-1zM6 39h1v1h-1zM9 39h2v1h-2zM12 39h1v1h-1zM14 39h2v1h-2zM20 39h1v1h-1zM23 39h1v1h-1zM25 39h1v1h-1zM28 39h2v1h-2zM32 39h2v1h-2zM35 39h1v1h-1zM37 39h3v1h-3zM0 40h7v1h-7zM8 40h1v1h-1zM13 40h2v1h-2zM18 40h1v1h-1zM23 40h2v1h-2zM26 40h1v1h-1zM31 40h4v1h-4zM38 40h1v1h-1z"/></svg>
<svg class="abs" style="left:232px;top:219px" width="17" height="20" viewBox="0 0 17 20"><path fill="#5a5a5a" d="M3.500 7h10v8.500c0 .6-.4 1-1 1h-1v2.700c0 .5-.5.9-1 .9s-1-.4-1-.9v-2.700H7.500v2.700c0 .5-.5.9-1 .9s-1-.4-1-.9v-2.700h-1c-.6 0-1-.4-1-1zM1.200 7c.6 0 1 .4 1 1v5c0 .6-.4 1-1 1s-1-.4-1-1V8c0-.6.4-1 1-1zm14.600 0c.6 0 1 .4 1 1v5c0 .6-.4 1-1 1s-1-.4-1-1V8c0-.6.4-1 1-1zM11.300 1.500l1-1.400-.3-.2-1 1.500C10.300 1 9.400.8 8.500.8s-1.800.2-2.500.6L5 0l-.3.2 1 1.400C4.400 2.300 3.500 3.800 3.500 5.500V6h10v-.5c0-1.700-.9-3.200-2.200-4zM6.300 4.200c-.3 0-.6-.3-.6-.6s.3-.6.6-.6.6.3.6.6-.3.6-.6.6zm4.400 0c-.3 0-.6-.3-.6-.6s.3-.6.6-.6.6.3.6.6-.3.6-.6.6z"/></svg>
  <div class="abs" style="left:254px;top:221px;font-size:14px;line-height:16px;color:#555">安卓端下载</div>
  <svg class="abs" style="left:228px;top:248px" width="100" height="100" viewBox="0 0 41 41"><rect width="41" height="41" fill="#fff"/><path fill="#000" d="M0 0h7v1h-7zM8 0h1v1h-1zM11 0h1v1h-1zM14 0h1v1h-1zM17 0h3v1h-3zM22 0h2v1h-2zM26 0h1v1h-1zM31 0h1v1h-1zM34 0h7v1h-7zM0 1h1v1h-1zM6 1h1v1h-1zM9 1h1v1h-1zM11 1h2v1h-2zM15 1h1v1h-1zM17 1h1v1h-1zM19 1h1v1h-1zM24 1h6v1h-6zM32 1h1v1h-1zM34 1h1v1h-1zM40 1h1v1h-1zM0 2h1v1h-1zM2 2h3v1h-3zM6 2h1v1h-1zM9 2h4v1h-4zM16 2h1v1h-1zM21 2h2v1h-2zM26 2h1v1h-1zM29 2h4v1h-4zM34 2h1v1h-1zM36 2h3v1h-3zM40 2h1v1h-1zM0 3h1v1h-1zM2 3h3v1h-3zM6 3h1v1h-1zM8 3h1v1h-1zM12 3h2v1h-2zM15 3h1v1h-1zM17 3h3v1h-3zM22 3h1v1h-1zM24 3h4v1h-4zM29 3h4v1h-4zM34 3h1v1h-1zM36 3h3v1h-3zM40 3h1v1h-1zM0 4h1v1h-1zM2 4h3v1h-3zM6 4h1v1h-1zM8 4h1v1h-1zM10 4h1v1h-1zM12 4h1v1h-1zM14 4h1v1h-1zM16 4h3v1h-3zM21 4h2v1h-2zM24 4h1v1h-1zM26 4h2v1h-2zM30 4h3v1h-3zM34 4h1v1h-1zM36 4h3v1h-3zM40 4h1v1h-1zM0 5h1v1h-1zM6 5h1v1h-1zM10 5h2v1h-2zM13 5h1v1h-1zM15 5h2v1h-2zM18 5h3v1h-3zM22 5h1v1h-1zM24 5h1v1h-1zM26 5h1v1h-1zM30 5h1v1h-1zM32 5h1v1h-1zM34 5h1v1h-1zM40 5h1v1h-1zM0 6h7v1h-7zM8 6h1v1h-1zM10 6h1v1h-1zM12 6h1v1h-1zM14 6h1v1h-1zM16 6h1v1h-1zM18 6h1v1h-1zM20 6h1v1h-1zM22 6h1v1h-1zM24 6h1v1h-1zM26 6h1v1h-1zM28 6h1v1h-1zM30 6h1v1h-1zM32 6h1v1h-1zM34 6h7v1h-7zM10 7h1v1h-1zM14 7h2v1h-2zM17 7h1v1h-1zM19 7h2v1h-2zM22 7h2v1h-2zM31 7h1v1h-1zM0 8h1v1h-1zM2 8h2v1h-2zM5 8h2v1h-2zM9 8h2v1h-2zM12 8h8v1h-8zM25 8h1v1h-1zM27 8h1v1h-1zM30 8h4v1h-4zM35 8h1v1h-1zM37 8h2v1h-2zM40 8h1v1h-1zM1 9h2v1h-2zM4 9h1v1h-1zM7 9h1v1h-1zM9 9h4v1h-4zM14 9h2v1h-2zM18 9h3v1h-3zM29 9h1v1h-1zM33 9h1v1h-1zM35 9h1v1h-1zM38 9h1v1h-1zM0 10h1v1h-1zM4 10h3v1h-3zM8 10h2v1h-2zM11 10h2v1h-2zM15 10h5v1h-5zM22 10h1v1h-1zM24 10h1v1h-1zM28 10h2v1h-2zM31 10h2v1h-2zM34 10h1v1h-1zM1 11h2v1h-2zM4 11h1v1h-1zM8 11h3v1h-3zM15 11h2v1h-2zM19 11h1v1h-1zM22 11h2v1h-2zM27 11h1v1h-1zM33 11h3v1h-3zM38 11h2v1h-2zM1 12h1v1h-1zM4 12h4v1h-4zM9 12h2v1h-2zM14 12h2v1h-2zM17 12h1v1h-1zM22 12h3v1h-3zM26 12h3v1h-3zM33 12h2v1h-2zM36 12h1v1h-1zM38 12h3v1h-3zM0 13h1v1h-1zM3 13h3v1h-3zM10 13h1v1h-1zM12 13h2v1h-2zM16 13h1v1h-1zM19 13h1v1h-1zM22 13h1v1h-1zM24 13h2v1h-2zM27 13h2v1h-2zM30 13h1v1h-1zM32 13h4v1h-4zM37 13h1v1h-1zM39 13h1v1h-1zM0 14h4v1h-4zM5 14h6v1h-6zM12 14h2v1h-2zM15 14h2v1h-2zM18 14h2v1h-2zM22 14h2v1h-2zM25 14h1v1h-1zM27 14h1v1h-1zM30 14h3v1h-3zM34 14h1v1h-1zM37 14h2v1h-2zM40 14h1v1h-1zM1 15h1v1h-1zM4 15h1v1h-1zM9 15h4v1h-4zM14 15h1v1h-1zM16 15h1v1h-1zM18 15h1v1h-1zM20 15h5v1h-5zM26 15h2v1h-2zM32 15h3v1h-3zM37 15h2v1h-2zM0 16h1v1h-1zM2 16h1v1h-1zM4 16h3v1h-3zM9 16h8v1h-8zM18 16h1v1h-1zM22 16h2v1h-2zM25 16h2v1h-2zM29 16h2v1h-2zM33 16h3v1h-3zM37 16h1v1h-1zM40 16h1v1h-1zM1 17h1v1h-1zM4 17h2v1h-2zM7 17h1v1h-1zM13 17h2v1h-2zM16 17h1v1h-1zM19 17h1v1h-1zM21 17h1v1h-1zM24 17h1v1h-1zM29 17h7v1h-7zM38 17h2v1h-2zM0 18h1v1h-1zM2 18h2v1h-2zM5 18h3v1h-3zM11 18h1v1h-1zM14 18h1v1h-1zM17 18h7v1h-7zM25 18h8v1h-8zM35 18h1v1h-1zM39 18h2v1h-2zM0 19h2v1h-2zM3 19h1v1h-1zM9 19h4v1h-4zM15 19h2v1h-2zM20 19h1v1h-1zM24 19h2v1h-2zM27 19h2v1h-2zM30 19h1v1h-1zM32 19h2v1h-2zM40 19h1v1h-1zM0 20h3v1h-3zM4 20h1v1h-1zM6 20h2v1h-2zM9 20h4v1h-4zM14 20h1v1h-1zM18 20h2v1h-2zM22 20h3v1h-3zM28 20h3v1h-3zM32 20h5v1h-5zM3 21h1v1h-1zM9 21h1v1h-1zM11 21h2v1h-2zM14 21h2v1h-2zM17 21h2v1h-2zM20 21h1v1h-1zM22 21h1v1h-1zM25 21h3v1h-3zM30 21h1v1h-1zM32 21h2v1h-2zM35 21h2v1h-2zM38 21h1v1h-1zM40 21h1v1h-1zM2 22h5v1h-5zM10 22h1v1h-1zM13 22h1v1h-1zM15 22h2v1h-2zM20 22h1v1h-1zM22 22h4v1h-4zM27 22h2v1h-2zM30 22h1v1h-1zM37 22h1v1h-1zM39 22h1v1h-1zM2 23h2v1h-2zM7 23h1v1h-1zM9 23h1v1h-1zM12 23h1v1h-1zM15 23h3v1h-3zM20 23h3v1h-3zM24 23h1v1h-1zM26 23h1v1h-1zM28 23h2v1h-2zM35 23h3v1h-3zM0 24h2v1h-2zM4 24h3v1h-3zM8 24h1v1h-1zM11 24h3v1h-3zM16 24h4v1h-4zM21 24h3v1h-3zM25 24h3v1h-3zM29 24h2v1h-2zM32 24h2v1h-2zM35 24h1v1h-1zM40 24h1v1h-1zM7 25h1v1h-1zM12 25h1v1h-1zM17 25h1v1h-1zM19 25h4v1h-4zM24 25h7v1h-7zM32 25h2v1h-2zM35 25h5v1h-5zM2 26h1v1h-1zM5 26h2v1h-2zM9 26h1v1h-1zM11 26h1v1h-1zM13 26h2v1h-2zM16 26h5v1h-5zM22 26h3v1h-3zM28 26h1v1h-1zM32 26h1v1h-1zM35 26h3v1h-3zM1 27h2v1h-2zM5 27h1v1h-1zM7 27h4v1h-4zM12 27h2v1h-2zM15 27h3v1h-3zM21 27h1v1h-1zM24 27h4v1h-4zM29 27h1v1h-1zM31 27h1v1h-1zM37 27h1v1h-1zM39 27h1v1h-1zM2 28h1v1h-1zM5 28h2v1h-2zM9 28h3v1h-3zM14 28h1v1h-1zM16 28h1v1h-1zM18 28h4v1h-4zM24 28h1v1h-1zM26 28h3v1h-3zM31 28h2v1h-2zM34 28h1v1h-1zM36 28h1v1h-1zM38 28h1v1h-1zM40 28h1v1h-1zM0 29h1v1h-1zM2 29h1v1h-1zM4 29h1v1h-1zM8 29h1v1h-1zM10 29h1v1h-1zM14 29h6v1h-6zM22 29h1v1h-1zM24 29h1v1h-1zM26 29h1v1h-1zM29 29h1v1h-1zM32 29h3v1h-3zM36 29h1v1h-1zM39 29h1v1h-1zM1 30h1v1h-1zM3 30h1v1h-1zM6 30h1v1h-1zM9 30h3v1h-3zM13 30h1v1h-1zM15 30h1v1h-1zM17 30h2v1h-2zM20 30h2v1h-2zM26 30h2v1h-2zM30 30h6v1h-6zM37 30h1v1h-1zM39 30h2v1h-2zM0 31h3v1h-3zM4 31h1v1h-1zM7 31h3v1h-3zM11 31h2v1h-2zM16 31h5v1h-5zM22 31h1v1h-1zM24 31h2v1h-2zM30 31h1v1h-1zM34 31h3v1h-3zM38 31h3v1h-3zM0 32h1v1h-1zM2 32h1v1h-1zM5 32h6v1h-6zM14 32h1v1h-1zM16 32h1v1h-1zM19 32h1v1h-1zM21 32h1v1h-1zM27 32h1v1h-1zM30 32h1v1h-1zM32 32h1v1h-1zM34 32h1v1h-1zM36 32h1v1h-1zM39 32h1v1h-1zM13 33h2v1h-2zM16 33h1v1h-1zM21 33h2v1h-2zM25 33h6v1h-6zM34 33h1v1h-1zM37 33h2v1h-2zM0 34h7v1h-7zM8 34h2v1h-2zM11 34h2v1h-2zM14 34h3v1h-3zM18 34h1v1h-1zM21 34h2v1h-2zM25 34h4v1h-4zM30 34h6v1h-6zM38 34h1v1h-1zM0 35h1v1h-1zM6 35h1v1h-1zM10 35h1v1h-1zM12 35h2v1h-2zM15 35h2v1h-2zM18 35h2v1h-2zM24 35h2v1h-2zM30 35h3v1h-3zM34 35h2v1h-2zM38 35h1v1h-1zM0 36h1v1h-1zM2 36h3v1h-3zM6 36h1v1h-1zM8 36h2v1h-2zM11 36h1v1h-1zM13 36h4v1h-4zM20 36h3v1h-3zM26 36h3v1h-3zM30 36h3v1h-3zM34 36h1v1h-1zM36 36h1v1h-1zM39 36h2v1h-2zM0 37h1v1h-1zM2 37h3v1h-3zM6 37h1v1h-1zM10 37h1v1h-1zM12 37h1v1h-1zM14 37h2v1h-2zM17 37h1v1h-1zM19 37h1v1h-1zM21 37h1v1h-1zM25 37h1v1h-1zM28 37h2v1h-2zM31 37h1v1h-1zM33 37h3v1h-3zM38 37h1v1h-1zM40 37h1v1h-1zM0 38h1v1h-1zM2 38h3v1h-3zM6 38h1v1h-1zM8 38h1v1h-1zM10 38h1v1h-1zM12 38h1v1h-1zM14 38h1v1h-1zM16 38h1v1h-1zM19 38h3v1h-3zM23 38h1v1h-1zM25 38h2v1h-2zM28 38h1v1h-1zM30 38h1v1h-1zM32 38h1v1h-1zM37 38h2v1h-2zM40 38h1v1h-1zM0 39h1v1h-1zM6 39h1v1h-1zM8 39h1v1h-1zM11 39h1v1h-1zM13 39h1v1h-1zM16 39h1v1h-1zM19 39h4v1h-4zM24 39h1v1h-1zM26 39h2v1h-2zM29 39h1v1h-1zM33 39h2v1h-2zM36 39h1v1h-1zM38 39h1v1h-1zM40 39h1v1h-1zM0 40h7v1h-7zM8 40h3v1h-3zM12 40h2v1h-2zM15 40h3v1h-3zM20 40h6v1h-6zM29 40h1v1h-1zM31 40h1v1h-1zM35 40h1v1h-1zM37 40h4v1h-4z"/></svg>

</div>

<!-- SECURITY -->
<div class="abs" style="left:256px;top:567px;width:1200px;height:250px;background:#fff;border-radius:7px"></div>

<div class="abs" style="left:320px;top:617px;width:150px;height:150px;border-radius:50%;background:#eeeeee"></div>
<div class="abs" style="left:340px;top:637px;width:110px;height:110px;border-radius:50%;background:#fff"></div>
<div class="abs" style="left:394px;top:605px;width:3px;height:8px;background:#4a9ad6"></div>
<div class="abs" style="left:394px;top:771px;width:3px;height:8px;background:#4a9ad6"></div>
<div class="abs" style="left:308px;top:690px;width:8px;height:3px;background:#4a9ad6"></div>
<div class="abs" style="left:474px;top:690px;width:8px;height:3px;background:#4a9ad6"></div>
<div class="abs" style="left:320px;top:658px;width:150px;text-align:center;font-size:20px;line-height:24px;color:#333">安全指数</div>
<div class="abs" style="left:320px;top:688px;width:150px;text-align:center;font-size:29px;line-height:34px;color:#f7b43c;letter-spacing:-1px;text-indent:-1px">0%</div>
<div class="abs" style="left:570px;top:586px;font-size:16px;line-height:18px;font-weight:bold;color:#444">安全星级:</div>
<div class="abs" style="left:860px;top:583px;width:44px;height:23px;border-radius:3px;background:#4e9cd9;color:#fff;font-size:13px;line-height:23px;text-align:center">提升</div>
<svg class="abs" style="left:570px;top:626px" width="17" height="16" viewBox="0 -0.5 17 17"><g fill="#c9d3de" stroke="#c9d3de" stroke-width="1" stroke-linejoin="round"><path d="M8.50 0.60L11.15 5.56L16.68 6.54L12.78 10.59L13.55 16.16L8.50 13.70L3.45 16.16L4.22 10.59L0.32 6.54L5.85 5.56z"/></g></svg><svg class="abs" style="left:596px;top:626px" width="17" height="16" viewBox="0 -0.5 17 17"><g fill="#c9d3de" stroke="#c9d3de" stroke-width="1" stroke-linejoin="round"><path d="M8.50 0.60L11.15 5.56L16.68 6.54L12.78 10.59L13.55 16.16L8.50 13.70L3.45 16.16L4.22 10.59L0.32 6.54L5.85 5.56z"/></g></svg><svg class="abs" style="left:622px;top:626px" width="17" height="16" viewBox="0 -0.5 17 17"><g fill="#c9d3de" stroke="#c9d3de" stroke-width="1" stroke-linejoin="round"><path d="M8.50 0.60L11.15 5.56L16.68 6.54L12.78 10.59L13.55 16.16L8.50 13.70L3.45 16.16L4.22 10.59L0.32 6.54L5.85 5.56z"/></g></svg><svg class="abs" style="left:648px;top:626px" width="17" height="16" viewBox="0 -0.5 17 17"><g fill="#c9d3de" stroke="#c9d3de" stroke-width="1" stroke-linejoin="round"><path d="M8.50 0.60L11.15 5.56L16.68 6.54L12.78 10.59L13.55 16.16L8.50 13.70L3.45 16.16L4.22 10.59L0.32 6.54L5.85 5.56z"/></g></svg><svg class="abs" style="left:674px;top:626px" width="17" height="16" viewBox="0 -0.5 17 17"><g fill="#c9d3de" stroke="#c9d3de" stroke-width="1" stroke-linejoin="round"><path d="M8.50 0.60L11.15 5.56L16.68 6.54L12.78 10.59L13.55 16.16L8.50 13.70L3.45 16.16L4.22 10.59L0.32 6.54L5.85 5.56z"/></g></svg>
<div class="lbl" style="top:665px">上次登录的IP:</div><div class="val" style="left:671px;top:665px">103.129.196.193</div>
<div class="lbl" style="top:694px">上次登录地址:</div><div class="val" style="left:672px;top:694px">Unknown</div>
<div class="lbl" style="top:723px">上次登录时间:</div><div class="val" style="left:676px;top:723px">2025-11-08 09:47:36</div>
<div class="abs" style="left:940px;top:586px;font-size:16px;line-height:18px;font-weight:bold;color:#444">最近登录:</div>
<div class="lr" style="top:615px"><span style="left:0">103.129.196.193</span><span style="left:156px">Unknown</span><span style="left:354px">2025-11-08 09:47:36</span></div>
<div class="lr" style="top:653px"><span style="left:0">34.87.181.20</span><span style="left:156px">Unknown</span><span style="left:354px">2025-11-08 09:44:51</span></div>
<div class="lr" style="top:691px"><span style="left:0">34.87.181.20</span><span style="left:156px">Unknown</span><span style="left:354px">2025-11-08 09:41:59</span></div>


<!-- FOOTER -->
<div class="abs" style="left:232px;top:825px;width:1247px;height:72px;background:#fafafa"></div>
<div class="abs" style="left:272px;top:843px;line-height:16px;font-size:14px;color:#333;white-space:nowrap;word-spacing:0.6px">博彩委员会监管服务 / 责任博彩 / 彩种玩法 / 玩法介绍 / 联系我们 / 常见问题 / 提款须知</div>
<div class="abs" style="left:272px;top:871px;line-height:14px;font-size:12px;color:#999;white-space:nowrap">郑重提示：&nbsp;彩票有风险，投注需谨慎，未满18周岁的青少年请自觉离开</div>
<div class="abs" style="left:1391px;top:843px;line-height:14px;font-size:13px;color:#2e5d9a;white-space:nowrap">权威认证</div>

<svg class="abs" style="left:1392px;top:859px" width="16" height="16" viewBox="0 0 16 16"><path d="M.5.5h10l5 5v10H.5z" fill="#dfe8f5" stroke="#8a8a8a" stroke-width="1"/><path d="M10.500.5v5h5" fill="#fff" stroke="#8a8a8a" stroke-width="1"/><path d="M3 4.500c.5-1 2-1 2.500 0h1c.5 0 .5 1 0 1H2.500c-.5 0-.5-1 .5-1z" fill="#fff"/><path d="M1 15c1-4 4-6 7-6 2 0 3.500 1 4.500 2.500L15 9v6z" fill="#4caf3f"/><path d="M8 16L16 8.500V6L5.500 16z" fill="#fafafa"/></svg>
<!-- FLOAT BUTTONS -->
<div class="fb" style="top:572px;background:#3a5795"></div>
<div class="fb" style="top:624px;background:#1ea5ef"></div>
<div class="fb" style="top:676px;background:#6f8485"></div>
<div class="fb" style="top:728px;background:#4a86ea"></div>
<div class="fb" style="top:780px;background:#3a5795"></div>
<div class="fb" style="top:832px;background:#ff6f5c"></div>

<svg class="abs" style="left:1432px;top:584px" width="28" height="28" viewBox="0 0 28 28"><g fill="none" stroke="#fff" stroke-width="2.600"><path d="M5 17v-4c0-5 4-9 9-9s9 4 9 9v4"/><path d="M20 23c-1 1-3 1.500-5 1.500"/></g><g fill="#fff"><rect x="4" y="13" width="5" height="9" rx="2.500"/><rect x="19" y="13" width="5" height="9" rx="2.500"/><rect x="12" y="23" width="5" height="3" rx="1.500"/></g></svg>
<svg class="abs" style="left:1434px;top:641px" width="25" height="18" viewBox="0 0 25 18"><g fill="none" stroke="#fff" stroke-width="2.800"><path d="M1.400 0v16.600h23.600"/><path d="M5 11.500l4.500-4 3.500 2.500 6-5.500"/></g><path fill="#fff" d="M16 2.500h6.500V9z"/></svg>
<svg class="abs" style="left:1438px;top:690px" width="16" height="25" viewBox="0 0 16 25"><rect x="1.300" y="1.300" width="13.400" height="22.400" rx="1.800" fill="none" stroke="#fff" stroke-width="2.600"/><rect x="1" y="18" width="14" height="6" fill="#fff"/><circle cx="8" cy="21" r="1.100" fill="#6f8485"/></svg>
<svg class="abs" style="left:1433px;top:741px" width="28" height="26" viewBox="0 0 28 26"><g fill="#fff"><rect x="0" y="19" width="4" height="7"/><rect x="6" y="14" width="4" height="12"/><rect x="12" y="9" width="4" height="17"/><rect x="18" y="4" width="4" height="22"/><rect x="24" y="0" width="4" height="26"/></g></svg>
<svg class="abs" style="left:1432px;top:792px" width="28" height="26" viewBox="0 0 28 26"><path fill="#fff" d="M14 1C6.500 1 1 5.800 1 11.500c0 3.300 1.800 6.200 4.700 8.100L4 25l6-3.400c1.300.3 2.600.4 4 .4 7.500 0 13-4.700 13-10.500S21.500 1 14 1z"/><g fill="#3a5795"><circle cx="8.500" cy="11.500" r="1.800"/><circle cx="14" cy="11.500" r="1.800"/><circle cx="19.500" cy="11.500" r="1.800"/></g></svg>
<svg class="abs" style="left:1437px;top:845px" width="18" height="26" viewBox="0 0 18 26"><path fill="none" stroke="#fff" stroke-width="4.500" stroke-linecap="round" stroke-linejoin="round" d="M4 3l9 10-9 10"/></svg>
<!-- SCROLLBAR -->
<div class="abs" style="left:1479px;top:321px;width:7px;height:576px;background:#888;border-radius:3.5px 3.5px 0 0"></div>

<!-- BOTTOM STRIP -->
<div class="abs" style="left:0;top:897px;width:1486px;height:7px;background:#d4e3ef;border-top:1px solid #a9b4bd"></div>
<div class="abs" style="left:150px;top:901px;width:36px;height:3px;border-radius:3px 3px 0 0;background:#eef3f7"></div>
<div class="abs" style="left:1410px;top:902px;width:7px;height:2px;border-radius:4px 4px 0 0;background:#c0282c"></div>

</body></html>
